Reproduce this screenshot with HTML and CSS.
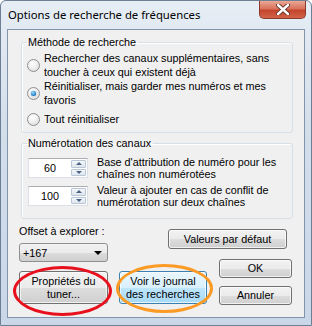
FILE: index.html
```html
<!DOCTYPE html>
<html lang="fr">
<head>
    <meta charset="UTF-8">
    <meta name="viewport" content="width=device-width, initial-scale=1.0">
    <title>Options de recherche de fréquences</title>
    <link rel="stylesheet" href="styles.css">
</head>
<body>
    <div class="window">
        <div class="titlebar">
            <span class="title">Options de recherche de fréquences</span>
            <div class="close">
                <svg width="14" height="11" viewBox="0 0 14 11">
                    <path d="M2 1 L12 10 M12 1 L2 10" stroke="#5a2a20" stroke-width="4.2" stroke-linecap="round"/>
                    <path d="M2 1 L12 10 M12 1 L2 10" stroke="#ffffff" stroke-width="2.4" stroke-linecap="round"/>
                </svg>
            </div>
        </div>

        <div class="client">
            <fieldset class="group methode">
                <legend>Méthode de recherche</legend>
                <div class="option">
                    <span class="radio"></span>
                    <span>Rechercher des canaux supplémentaires, sans<br>toucher à ceux qui existent déjà</span>
                </div>
                <div class="option">
                    <span class="radio checked"></span>
                    <span>Réinitialiser, mais garder mes numéros et mes<br>favoris</span>
                </div>
                <div class="option last">
                    <span class="radio"></span>
                    <span>Tout réinitialiser</span>
                </div>
            </fieldset>

            <fieldset class="group numbering">
                <legend>Numérotation des canaux</legend>
                <div class="spin-row">
                    <div class="spin">
                        <span class="spin-value">60</span>
                        <span class="spin-btns">
                            <span class="spin-btn up"></span>
                            <span class="spin-btn down"></span>
                        </span>
                    </div>
                    <span class="spin-label">Base d'attribution de numéro pour les<br>chaînes non numérotées</span>
                </div>
                <div class="spin-row">
                    <div class="spin">
                        <span class="spin-value">100</span>
                        <span class="spin-btns">
                            <span class="spin-btn up"></span>
                            <span class="spin-btn down"></span>
                        </span>
                    </div>
                    <span class="spin-label">Valeur à ajouter en cas de conflit de<br>numérotation sur deux chaînes</span>
                </div>
            </fieldset>

            <div class="bottom">
                <div class="left-col">
                    <span class="offset-label">Offset à explorer :</span>
                    <div class="combo">
                        <span>+167</span>
                        <span class="arrow"></span>
                    </div>
                    <div class="big-buttons">
                        <div class="btn big">Propriétés du<br>tuner...</div>
                        <div class="btn big hot">Voir le journal<br>des recherches</div>
                    </div>
                </div>
                <div class="right-col">
                    <div class="btn defaults">Valeurs par défaut</div>
                    <div class="btn ok">OK</div>
                    <div class="btn cancel">Annuler</div>
                </div>
            </div>
        </div>

        <!-- annotation marks drawn over the dialog -->
        <span class="mark red"></span>
        <span class="mark orange"></span>
    </div>
</body>
</html>
```

FILE: styles.css
```css
body {
    margin: 0;
    padding: 0;
    font-family: "Liberation Sans", Arial, sans-serif;
    font-size: 10.8px;
    color: #000;
    background: #fff;
}

.window {
    position: relative;
    width: 312px;
    height: 326px;
    box-sizing: border-box;
    border: 1px solid #6d7f94;
    border-radius: 6px 6px 0 0;
    background: linear-gradient(180deg, #e6edf5 0%, #d3deeb 40%, #c9d7e8 100%);
    display: flex;
    flex-direction: column;
    overflow: hidden;
}

.titlebar {
    height: 28px;
    flex-shrink: 0;
    display: flex;
    justify-content: space-between;
    align-items: flex-start;
}

.title {
    font-family: "Noto Sans", sans-serif;
    font-size: 11.3px;
    margin: 6px 0 0 7px;
    white-space: nowrap;
}

.close {
    width: 47px;
    height: 18px;
    margin-right: 5px;
    box-sizing: border-box;
    border: 1px solid #8a3a2c;
    border-top: none;
    border-radius: 0 0 5px 5px;
    background: linear-gradient(180deg, #e9a896 0%, #d9725c 45%, #c5442c 55%, #d2644a 100%);
    display: flex;
    justify-content: center;
    align-items: center;
}

.client {
    width: 298px;
    height: 289px;
    flex-shrink: 0;
    margin-left: 6px;
    box-sizing: border-box;
    border: 1px solid #8294ab;
    background: #f0f0f0;
    padding: 0 11px;
    white-space: nowrap;
}

.group {
    margin: 0 0 0 2px;
    min-width: 0;
    border: 1px solid #d5dfe5;
    border-radius: 3px;
    box-shadow: inset 1px 1px 0 #fff;
    padding: 2px 5px 6px 5px;
}

.group legend {
    padding: 0 2px 0 1px;
    line-height: 13px;
}

.methode {
    margin-top: 6px;
}

.option {
    display: flex;
    align-items: center;
    gap: 4px;
    line-height: 14px;
}

.option.last {
    margin-top: 5px;
}

.radio {
    width: 13px;
    height: 13px;
    box-sizing: border-box;
    border-radius: 50%;
    border: 1px solid #8e8f8f;
    background: radial-gradient(circle at 40% 35%, #ffffff 0%, #f1f1f1 40%, #d4d4d4 100%);
    display: flex;
    justify-content: center;
    align-items: center;
    flex-shrink: 0;
}

.radio.checked::after {
    content: '';
    width: 5px;
    height: 5px;
    border-radius: 50%;
    background: radial-gradient(circle at 40% 35%, #9be0ff 0%, #2e8bd0 55%, #0d4f8c 100%);
    box-shadow: 0 0 1px #1b5c96;
}

.numbering {
    margin-top: 4px;
    padding-top: 6px;
    padding-bottom: 10px;
}

.spin-row {
    display: flex;
    align-items: center;
    gap: 9px;
    margin-left: 1px;
}

.spin-row + .spin-row {
    margin-top: 4px;
}

.spin {
    width: 60px;
    height: 20px;
    box-sizing: border-box;
    border: 1px solid #dbdfe6;
    border-top-color: #abadb3;
    background: #fff;
    display: flex;
    align-items: stretch;
}

.spin-value {
    flex: 1;
    text-align: center;
    line-height: 18px;
}

.spin-btns {
    width: 15px;
    display: flex;
    flex-direction: column;
    gap: 1px;
    padding: 1px 1px 1px 0;
}

.spin-btn {
    flex: 1;
    border: 1px solid #b9c6d6;
    border-radius: 1px;
    background: linear-gradient(180deg, #f4f7fa 0%, #dde5ee 100%);
    display: flex;
    justify-content: center;
    align-items: center;
}

.spin-btn::after {
    content: '';
    border-left: 3px solid transparent;
    border-right: 3px solid transparent;
}

.spin-btn.up::after {
    border-bottom: 3px solid #4d6185;
}

.spin-btn.down::after {
    border-top: 3px solid #4d6185;
}

.spin-label {
    line-height: 12px;
}

.bottom {
    display: flex;
    justify-content: space-between;
    margin-top: 6px;
    padding-right: 1px;
}

.left-col {
    width: 188px;
    display: flex;
    flex-direction: column;
}

.offset-label {
    line-height: 13px;
}

.combo {
    width: 89px;
    height: 19px;
    margin-top: 5px;
    box-sizing: border-box;
    border: 1px solid #8e8f8f;
    border-radius: 3px;
    background: linear-gradient(180deg, #f2f2f2 0%, #ebebeb 50%, #dddddd 51%, #cfcfcf 100%);
    display: flex;
    justify-content: space-between;
    align-items: center;
    padding: 0 5px 0 3px;
}

.arrow {
    border-left: 4px solid transparent;
    border-right: 4px solid transparent;
    border-top: 4px solid #000;
}

.big-buttons {
    display: flex;
    gap: 11px;
    margin-top: 9px;
}

.btn {
    box-sizing: border-box;
    height: 19px;
    border: 1px solid #707070;
    border-radius: 3px;
    background: linear-gradient(180deg, #f2f2f2 0%, #ebebeb 50%, #dddddd 51%, #cfcfcf 100%);
    box-shadow: inset 0 0 0 1px rgba(255, 255, 255, 0.7);
    display: flex;
    justify-content: center;
    align-items: center;
    text-align: center;
    line-height: 13px;
}

.btn.big {
    width: 89px;
    height: 33px;
}

.btn.big.hot {
    width: 88px;
    border-color: #3c7fb1;
    background: linear-gradient(180deg, #eaf6fd 0%, #d9f0fc 50%, #bee6fd 51%, #a7d9f5 100%);
}

.right-col {
    width: 73px;
    display: flex;
    flex-direction: column;
}

.btn.defaults {
    width: 119px;
    height: 20px;
    align-self: flex-end;
    margin: 4px 5px 0 0;
}

.btn.ok {
    margin-top: 10px;
}

.btn.cancel {
    margin-top: 8px;
}

.mark {
    position: absolute;
    box-sizing: border-box;
    border-radius: 50%;
    border: 3px solid;
}

.mark.red {
    left: 12px;
    top: 265px;
    width: 99px;
    height: 50px;
    border-color: #e8101c;
}

.mark.orange {
    left: 115px;
    top: 263px;
    width: 97px;
    height: 49px;
    border-color: #fb9a24;
}
```
